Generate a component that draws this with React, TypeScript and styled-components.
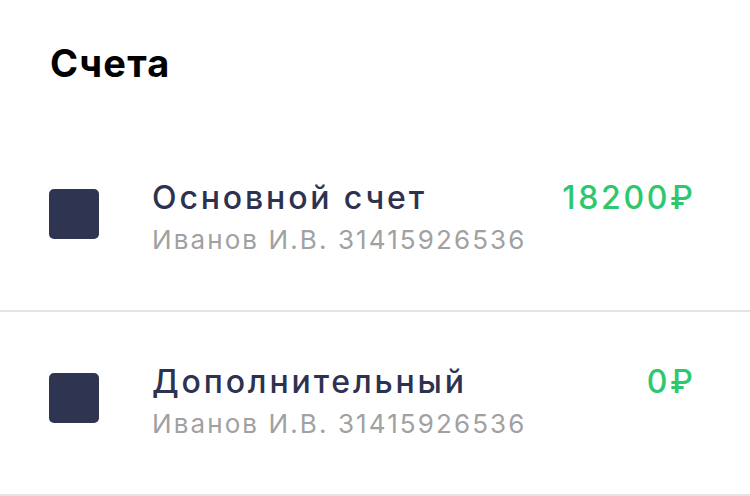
import React from 'react';
import styled, {createGlobalStyle} from 'styled-components';

type Account = {
	id: string;
	name: string;
	owner: string;
	number: string;
	balance: number;
};

const accounts: Account[] = [
	{id: 'main', name: 'Основной счет', owner: 'Иванов И.В.', number: '31415926536', balance: 18200},
	{id: 'extra', name: 'Дополнительный', owner: 'Иванов И.В.', number: '31415926536', balance: 0},
];

const GlobalStyle = createGlobalStyle`
	html, body {
		margin: 0;
		padding: 0;
		background: #ffffff;
	}
	body {
		font-family: Inter, "Noto Sans", "Liberation Sans", sans-serif;
		-webkit-font-smoothing: antialiased;
	}
`;

const Screen = styled.div`
	width: 750px;
	height: 496px;
	overflow: hidden;
	background: #ffffff;
`;

const Heading = styled.h1`
	margin: 0;
	padding: 41px 0 0 50px;
	height: 128px;
	box-sizing: border-box;
	font-size: 38px;
	line-height: 44px;
	font-weight: 700;
	color: #000000;
	letter-spacing: 1.2px;
`;

const List = styled.div`
	display: flex;
	flex-direction: column;
`;

const Row = styled.div`
	display: flex;
	align-items: flex-start;
	height: 184px;
	box-sizing: border-box;
	padding: 52px 57px 0 49px;
	border-bottom: 2px solid #e3e3e3;
`;

const Badge = styled.div`
	width: 50px;
	height: 50px;
	margin-top: 9px;
	border-radius: 5px;
	background: #2f3450;
	flex-shrink: 0;
`;

const Info = styled.div`
	flex: 1;
	display: flex;
	flex-direction: column;
	margin-left: 53px;
`;

const Title = styled.div`
	font-size: 32px;
	line-height: 36px;
	font-weight: 500;
	color: #2d3250;
	letter-spacing: 2.85px;
`;

const Subtitle = styled.div`
	margin-top: 9px;
	font-size: 26px;
	line-height: 30px;
	font-weight: 400;
	color: #a1a1a1;
	letter-spacing: 2.1px;
`;

const Amount = styled.div`
	font-size: 32px;
	line-height: 36px;
	font-weight: 500;
	color: #2dc76d;
	letter-spacing: 2.7px;
	margin-right: -2.7px;
	white-space: nowrap;
`;

export default function App() {
	return (
		<Screen>
			<GlobalStyle />
			<Heading>Счета</Heading>
			<List>
				{accounts.map((a) => (
					<Row key={a.id}>
						<Badge />
						<Info>
							<Title>{a.name}</Title>
							<Subtitle>
								{a.owner} {a.number}
							</Subtitle>
						</Info>
						<Amount>{a.balance}₽</Amount>
					</Row>
				))}
			</List>
		</Screen>
	);
}
